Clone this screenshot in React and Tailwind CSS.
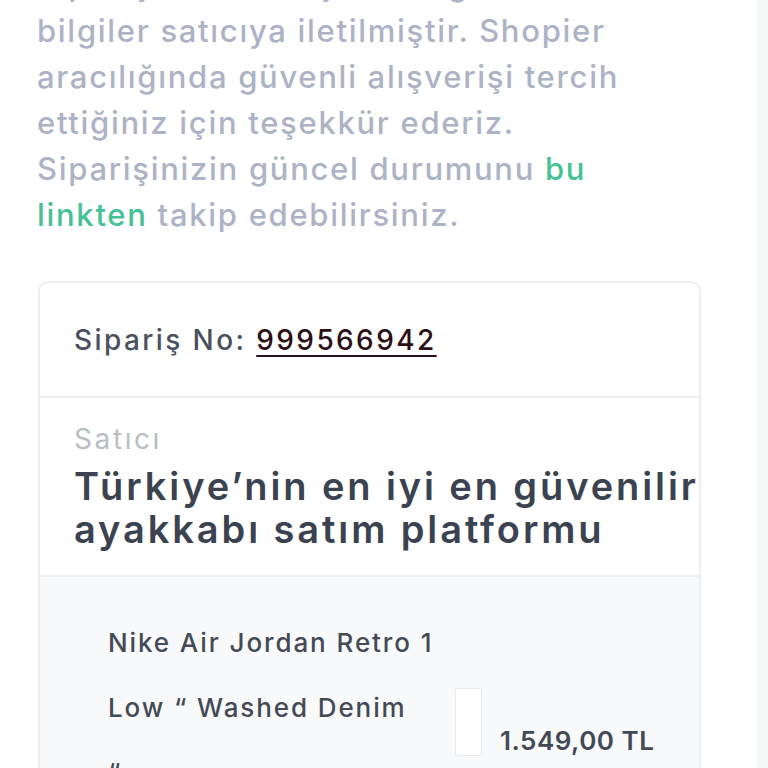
import React from "react";

export default function App() {
  const font = { fontFamily: "Inter, 'Noto Sans', sans-serif" };
  return (
    <div className="w-[768px] h-[768px] overflow-hidden bg-white flex" style={font}>
      <div className="flex-1 flex flex-col">
        <p className="mt-[-38px] ml-[37px] w-[680px] text-[31px] leading-[46px] font-medium text-[#adb3c5] tracking-[1.7px] whitespace-nowrap">
          Siparişiniz alınmıştır ve ilgili
          <br />
          bilgiler satıcıya iletilmiştir. Shopier
          <br />
          aracılığında güvenli alışverişi tercih
          <br />
          ettiğiniz için teşekkür ederiz.
          <br />
          Siparişinizin güncel durumunu <span className="text-[#45c196]">bu</span>
          <br />
          <span className="text-[#45c196]">linkten</span> takip edebilirsiniz.
        </p>
        <div className="mt-[43px] ml-[38px] w-[663px] border-2 border-[#eceef0] rounded-[10px] bg-white">
          <div className="h-[115px] flex items-center px-[34px] border-b-2 border-[#eceef0]">
            <span className="text-[28px] font-medium text-[#4a515d] tracking-[2.4px] whitespace-nowrap">
              Sipariş No:{" "}
              <span className="text-[#2b1016] underline decoration-2 underline-offset-[5px]">999566942</span>
            </span>
          </div>
          <div className="px-[34px] pt-[21px] pb-[24px] border-b-2 border-[#eceef0]">
            <div className="text-[28px] leading-[40px] text-[#b9bdc6] tracking-[2.6px]">Satıcı</div>
            <div className="mt-[6px] text-[38px] leading-[43px] font-semibold text-[#3c4350] whitespace-nowrap tracking-[2.9px]">
              Türkiye’nin en iyi en güvenilir
              <br />
              ayakkabı satım platformu
            </div>
          </div>
          <div className="bg-[#f8f9fa] pl-[68px] pr-[30px] pt-[33px] h-[300px] flex">
            <div className="w-[347px] text-[26px] leading-[65px] font-medium text-[#434a56] tracking-[1.9px] whitespace-nowrap">
              Nike Air Jordan Retro 1
              <br />
              Low “ Washed Denim
              <br />
              “
            </div>
            <div className="mt-[78px] w-[27px] h-[68px] bg-white border border-[#e9eaec] rounded-[2px]" />
            <div className="ml-[18px] mt-[111px] text-[26px] font-semibold text-[#434a56] whitespace-nowrap tracking-[0.5px]">
              1.549,00 TL
            </div>
          </div>
        </div>
      </div>
      <div className="w-[11px] h-full bg-[#f6f7f7]" />
    </div>
  );
}
